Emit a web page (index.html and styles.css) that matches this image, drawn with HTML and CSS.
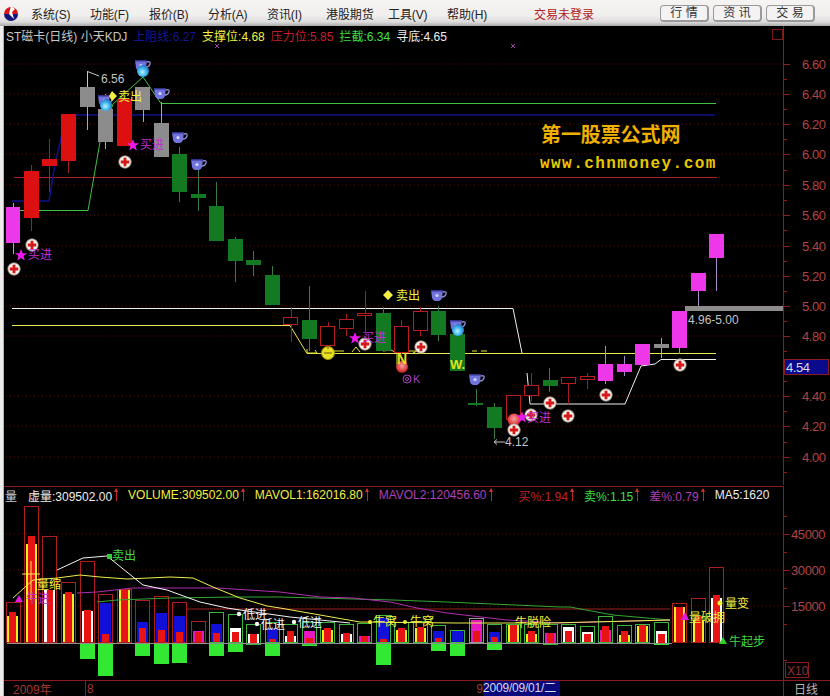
FILE: index.html
```html
<!DOCTYPE html>
<html lang="zh">
<head>
<meta charset="utf-8">
<title>ST磁卡 日线</title>
<link rel="stylesheet" href="styles.css">
</head>
<body>
<div class="app">
  <header class="menubar">
    <svg class="logo" viewBox="0 0 16 17" width="16" height="17"><path d="M1 9a7 7 0 0 1 14 0z" fill="#d81818"/><path d="M1 9a7 7 0 0 0 14 0z" fill="#14147a"/><path d="M8 1l-2 8 5 5-2-7 3-3z" fill="#fff"/></svg>
    <nav class="menu">
      <span class="mi">系统(S)</span><span class="mi">功能(F)</span><span class="mi">报价(B)</span><span class="mi">分析(A)</span><span class="mi">资讯(I)</span><span class="mi mi-hk">港股期货</span><span class="mi">工具(V)</span><span class="mi">帮助(H)</span>
    </nav>
    <span class="status">交易未登录</span>
    <div class="tabs"><span class="tab">行 情</span><span class="tab">资 讯</span><span class="tab">交 易</span></div>
  </header>
  <div class="body">
    <div class="strip"></div>
    <main class="chart">
      <div class="legend">
        <span class="l-title">ST磁卡(日线) 小天KDJ</span>
        <span class="navy">上阻线:6.27</span>
        <span class="yellow">支撑位:4.68</span>
        <span class="red">压力位:5.85</span>
        <span class="green">拦截:6.34</span>
        <span class="white">寻底:4.65</span>
        <span class="winbox"></span>
      </div>
      <svg class="pane pane-top" viewBox="4 45 826 441" width="826" height="441">
        <defs>
          <radialGradient id="ballBlue" cx=".45" cy=".6" r=".6"><stop offset="0" stop-color="#b8f4ff"/><stop offset=".6" stop-color="#38b0e8"/><stop offset="1" stop-color="#2a6cc0"/></radialGradient>
          <radialGradient id="ballRed" cx=".5" cy=".4" r=".6"><stop offset="0" stop-color="#f8a0a0"/><stop offset=".7" stop-color="#e04040"/><stop offset="1" stop-color="#a01818"/></radialGradient>
          <symbol id="cup" viewBox="0 0 16 12" width="16" height="12" overflow="visible">
            <path d="M0 1h12l-1 8q-1 3-3 3H4q-2 0-3-3z" fill="#7373dd"/>
            <path d="M0 1h12v1.5H0z" fill="#33338c"/>
            <path d="M12 3q4-1 3 2t-4 3" fill="none" stroke="#9090d8" stroke-width="1.3"/>
            <circle cx="6" cy="6.5" r="1.6" fill="#d0d8ff"/>
          </symbol>
          <symbol id="plus" viewBox="0 0 14 14" width="14" height="14">
            <circle cx="7" cy="7" r="6.2" fill="#f0f0ea" stroke="#99887a" stroke-width=".8"/>
            <path d="M5.6 2.8h2.8v2.8h2.8v2.8H8.4v2.8H5.6V8.4H2.8V5.6h2.8z" fill="#d81818"/>
          </symbol>
          <symbol id="star" viewBox="0 0 12 12" width="12" height="12"><path d="M6 0l1.6 4.2H12L8.5 7l1.3 4.6L6 9l-3.8 2.6L3.5 7 0 4.2h4.4z" fill="#f018f0"/></symbol>
        </defs>

        <path class="grid" d="M6 65H783M6 95H783M6 125H783M6 155H783M6 186H783M6 216H783M6 247H783M6 277H783M6 307H783M6 337H783M6 397H783M6 427H783M6 458H783"/>

        <path class="axis" d="M783.5 45V486M783 65h7M783 80h4M783 95h7M783 110h4M783 125h7M783 140h4M783 155h7M783 171h4M783 186h7M783 201h4M783 216h7M783 231h4M783 247h7M783 262h4M783 277h7M783 292h4M783 307h7M783 322h4M783 337h7M783 352h4M783 382h4M783 397h7M783 412h4M783 427h7M783 443h4M783 458h7M783 473h4"/>
        <g class="ylabels">
          <text x="802" y="70">6.60</text><text x="802" y="100">6.40</text><text x="802" y="130">6.20</text><text x="802" y="160">6.00</text><text x="802" y="191">5.80</text><text x="802" y="221">5.60</text><text x="802" y="252">5.40</text><text x="802" y="282">5.20</text><text x="802" y="312">5.00</text><text x="802" y="342">4.80</text><text x="802" y="402">4.40</text><text x="802" y="432">4.20</text><text x="802" y="463">4.00</text>
        </g>
        <rect class="pricebox" x="784.5" y="360.5" width="44" height="15"/>
        <text class="pricetext" x="786" y="373">4.54</text>

        <path class="l-red" d="M14 178.5H717"/>
        <path class="l-blue" d="M12 202H49L55 165 62 135 76 116H715"/>
        <path class="l-green" d="M20 211.5H88L100 143 113 105 143 78 161 104.500H716"/>
        <path class="l-white" d="M12 309.500H513L522 354"/>
        <path class="l-yellow" d="M12 326.500H290L307 354.500H716"/>
        <path class="l-white" d="M527 374L530 405H625L641 367 655 365 661 360.500H716"/>
        <path class="l-yfrag" d="M307 350v4h10l-2-3M332 352h12M352 353l4-5 4 5M383 352l8-1 6 3M397 352h20l-4 2M397 352v14h9M472 352h5M481 352h6"/>

        <path class="w-red" d="M31 166V232M49 140V193M68 115V174M124 100V147M291 308V343M328 323V352M346 315V337M365 292V333M401 321V367M420 308V337M513 396V435M531 374V402M568 378V405M587 374V390"/>
        <path class="w-gray" d="M87 72V131M105 95V150M143 88V123M161 103V158M661 339V359M13 204V255"/>
        <path class="w-green" d="M179 148V203M198 160V212M216 183V207M235 238V283M253 252V277M272 267V280M309 287V352M383 308V352M438 307V342M476 390V407M494 404V440M549 369V393"/>
        <path class="w-pink" d="M605 347V385M624 357V377M642 345V366M679 349V355M698 292V308M716 259V292"/>

        <g class="b-pink"><rect x="6" y="208" width="14" height="36"/><rect x="598" y="365" width="15" height="17"/><rect x="617" y="365" width="15" height="8"/><rect x="635" y="345" width="15" height="21"/><rect x="672" y="312" width="15" height="37"/><rect x="691" y="274" width="15" height="18"/><rect x="709" y="235" width="15" height="24"/></g>
        <g class="b-red"><rect x="24" y="172" width="15" height="47"/><rect x="42" y="160" width="15" height="7"/><rect x="61" y="115" width="15" height="47"/><rect x="117" y="100" width="15" height="47"/></g>
        <g class="b-gray"><rect x="80" y="88" width="15" height="20"/><rect x="98" y="110" width="15" height="33"/><rect x="135" y="88" width="15" height="23"/><rect x="154" y="124" width="15" height="34"/><rect x="654" y="345" width="15" height="4"/><rect x="685" y="307" width="98" height="5"/></g>
        <g class="b-green"><rect x="172" y="155" width="15" height="38"/><rect x="191" y="195" width="15" height="4"/><rect x="209" y="207" width="15" height="35"/><rect x="228" y="240" width="15" height="22"/><rect x="246" y="261" width="15" height="5"/><rect x="265" y="276" width="15" height="30"/><rect x="302" y="321" width="15" height="19"/><rect x="376" y="314" width="15" height="38"/><rect x="431" y="312" width="15" height="24"/><rect x="450" y="335" width="15" height="37"/><rect x="468" y="404" width="15" height="2"/><rect x="487" y="408" width="15" height="21"/><rect x="543" y="381" width="15" height="6"/></g>
        <g class="b-hollow"><rect x="283.500" y="318.500" width="14" height="7"/><rect x="320.500" y="327.500" width="14" height="19"/><rect x="339.500" y="320.500" width="14" height="9"/><rect x="357.500" y="314.500" width="14" height="2"/><rect x="394.500" y="327.500" width="14" height="26"/><rect x="413.500" y="312.500" width="14" height="19"/><rect x="506.500" y="396.500" width="14" height="24"/><rect x="524.500" y="386.500" width="14" height="10"/><rect x="561.500" y="378.500" width="14" height="6"/><rect x="580.500" y="377.500" width="14" height="3"/></g>

        <use href="#cup" x="135" y="60"/><use href="#cup" x="98" y="95"/><use href="#cup" x="154" y="88"/><use href="#cup" x="172" y="132"/><use href="#cup" x="191" y="159"/><use href="#cup" x="431" y="290"/><use href="#cup" x="450" y="320"/><use href="#cup" x="469" y="374"/>
        <circle cx="143" cy="72" r="6" fill="url(#ballBlue)"/><circle cx="106" cy="106" r="6" fill="url(#ballBlue)"/><circle cx="458" cy="331" r="6" fill="url(#ballBlue)"/>
        <circle cx="402" cy="368" r="6" fill="url(#ballRed)"/><circle cx="514" cy="421" r="6.500" fill="url(#ballRed)"/>
        <circle cx="328" cy="354" r="6.500" fill="#e8e020" stroke="#a09810"/><path d="M324 354h8M328 350v-3" stroke="#605a10" fill="none"/>

        <use href="#plus" x="118" y="156"/><use href="#plus" x="25" y="239"/><use href="#plus" x="7" y="263"/><use href="#plus" x="358" y="338"/><use href="#plus" x="414" y="341"/><use href="#plus" x="524" y="409"/><use href="#plus" x="543" y="397"/><use href="#plus" x="507" y="424"/><use href="#plus" x="561" y="410"/><use href="#plus" x="599" y="389"/><use href="#plus" x="673" y="359"/>

        <use href="#star" x="127" y="140"/><use href="#star" x="15" y="250"/><use href="#star" x="349" y="333"/><use href="#star" x="516" y="412"/>
        <g class="t-magenta"><text x="140" y="150">买进</text><text x="28" y="260">买进</text><text x="362" y="343">买进</text><text x="527" y="423">买进</text></g>

        <path class="dia" d="M112 92l5 5-5 5-3-5zM388 291l5 5-5 5-5-5z"/>
        <g class="t-yellow"><text x="118" y="102">卖出</text><text x="396" y="301">卖出</text></g>
        <text class="t-wbold" x="450" y="370">W.</text>
        <text class="t-nbold" x="397" y="365">N</text>

        <path class="flag" d="M87.500 88V72.500L99 77"/>
        <text class="t-gray" x="101" y="84">6.56</text>
        <path class="flag" d="M505 443H494l3-2.500M494 443l3 2.500"/>
        <text class="t-gray" x="505" y="447">4.12</text>
        <text class="t-gray" x="688" y="325">4.96-5.00</text>
        <circle class="ok" cx="407" cy="380" r="4"/><circle class="ok" cx="407" cy="380" r="1.500"/>
        <text class="t-ok" x="413" y="384">K</text>

        <path class="xm" d="M215 45l4 4M219 45l-4 4M511 45l4 4M515 45l-4 4"/>

        <text class="wm1" x="541" y="143">第一股票公式网</text>
        <text class="wm2" x="540" y="169">www.chnmoney.com</text>
      </svg>
      <div class="vlegend">
        <span class="v-name">量</span>
        <span class="vi v-a white">虚量:309502.00</span><i class="arr"></i>
        <span class="vi yellow">VOLUME:309502.00</span><i class="arr"></i>
        <span class="vi yellow">MAVOL1:162016.80</span><i class="arr"></i>
        <span class="vi purple">MAVOL2:120456.60</span><i class="arr"></i>
        <span class="vi v-b red">买%:1.94</span><i class="arr"></i>
        <span class="vi green">卖%:1.15</span><i class="arr"></i>
        <span class="vi purple">差%:0.79</span><i class="arr"></i>
        <span class="vi white">MA5:1620</span>
      </div>
      <svg class="pane pane-vol" viewBox="4 503 826 177" width="826" height="177">
        <path class="grid" d="M6 534H783M6 570H783M6 606H783"/>
        <path class="axis" d="M783.500 503V680M783 516h4M783 534h7M783 552h4M783 570h7M783 588h4M783 606h7M783 624h4M783 660h4"/>
        <g class="ylabels"><text x="791" y="539">45000</text><text x="791" y="575">30000</text><text x="791" y="611">15000</text></g>
        <rect class="x10" x="785.500" y="662.500" width="23" height="15"/><text class="x10t" x="787" y="675">X10</text>

        <g class="neg"><rect x="80" y="643" width="15" height="16"/><rect x="98" y="643" width="15" height="33"/><rect x="135" y="643" width="15" height="13"/><rect x="154" y="643" width="15" height="21"/><rect x="172" y="643" width="15" height="20"/><rect x="209" y="643" width="15" height="13"/><rect x="228" y="643" width="15" height="9"/><rect x="246" y="643" width="15" height="2"/><rect x="265" y="643" width="15" height="13"/><rect x="302" y="643" width="15" height="3"/><rect x="376" y="643" width="15" height="22"/><rect x="431" y="643" width="15" height="8"/><rect x="450" y="643" width="15" height="13"/><rect x="487" y="643" width="15" height="7"/><rect x="543" y="643" width="15" height="2"/><rect x="654" y="643" width="15" height="2"/></g>

        <g class="f-white"><rect x="44" y="590" width="11" height="53"/><rect x="82" y="611" width="11" height="32"/><rect x="230" y="628" width="11" height="15"/><rect x="248" y="634" width="11" height="9"/><rect x="285" y="636" width="11" height="7"/><rect x="341" y="634" width="11" height="9"/><rect x="563" y="627" width="11" height="16"/><rect x="582" y="632" width="11" height="11"/><rect x="656" y="631" width="11" height="12"/><rect x="711" y="598" width="11" height="45"/></g>
        <g class="f-yellow"><rect x="7" y="616" width="11" height="27"/><rect x="26" y="544" width="11" height="99"/><rect x="63" y="594" width="11" height="49"/><rect x="119" y="589" width="11" height="54"/><rect x="322" y="630" width="11" height="13"/><rect x="396" y="630" width="11" height="13"/><rect x="415" y="628" width="11" height="15"/><rect x="508" y="625" width="11" height="18"/><rect x="526" y="634" width="11" height="9"/><rect x="619" y="635" width="11" height="8"/><rect x="637" y="626" width="11" height="17"/><rect x="674" y="607" width="11" height="36"/><rect x="693" y="620" width="11" height="23"/></g>
        <g class="f-blue"><rect x="100" y="603" width="11" height="40"/><rect x="137" y="622" width="11" height="21"/><rect x="156" y="613" width="11" height="30"/><rect x="174" y="616" width="11" height="27"/><rect x="211" y="624" width="11" height="19"/><rect x="267" y="628" width="11" height="15"/><rect x="378" y="618" width="11" height="25"/><rect x="433" y="631" width="11" height="12"/><rect x="452" y="630" width="11" height="13"/><rect x="489" y="632" width="11" height="11"/></g>
        <g class="f-pink"><rect x="193" y="631" width="11" height="12"/><rect x="304" y="631" width="11" height="12"/><rect x="359" y="636" width="11" height="7"/><rect x="471" y="620" width="11" height="23"/><rect x="545" y="633" width="11" height="10"/><rect x="600" y="630" width="11" height="13"/></g>
        <g class="f-red"><rect x="9" y="612" width="7" height="31"/><rect x="28" y="536" width="7" height="107"/><rect x="47" y="590" width="6" height="53"/><rect x="65" y="592" width="7" height="51"/><rect x="84" y="610" width="7" height="33"/><rect x="102" y="634" width="7" height="9"/><rect x="121" y="589" width="7" height="54"/><rect x="139" y="628" width="7" height="15"/><rect x="158" y="630" width="7" height="13"/><rect x="176" y="632" width="7" height="11"/><rect x="195" y="632" width="7" height="11"/><rect x="213" y="633" width="7" height="10"/><rect x="232" y="632" width="7" height="11"/><rect x="250" y="634" width="7" height="9"/><rect x="269" y="639" width="7" height="4"/><rect x="287" y="631" width="7" height="12"/><rect x="306" y="638" width="7" height="5"/><rect x="324" y="628" width="7" height="15"/><rect x="343" y="633" width="7" height="10"/><rect x="361" y="636" width="7" height="7"/><rect x="380" y="639" width="7" height="4"/><rect x="398" y="628" width="7" height="15"/><rect x="417" y="627" width="7" height="16"/><rect x="435" y="638" width="7" height="5"/><rect x="473" y="631" width="7" height="12"/><rect x="491" y="637" width="7" height="6"/><rect x="510" y="625" width="7" height="18"/><rect x="528" y="631" width="7" height="12"/><rect x="547" y="633" width="7" height="10"/><rect x="565" y="631" width="7" height="12"/><rect x="584" y="634" width="7" height="9"/><rect x="602" y="626" width="7" height="17"/><rect x="621" y="631" width="7" height="12"/><rect x="639" y="625" width="7" height="18"/><rect x="658" y="634" width="7" height="9"/><rect x="676" y="607" width="7" height="36"/><rect x="695" y="616" width="7" height="27"/><rect x="713" y="595" width="7" height="48"/></g>

        <g class="o-red"><rect x="6.500" y="602.500" width="14" height="40"/><rect x="24.500" y="506.500" width="14" height="136"/><rect x="42.500" y="536.500" width="14" height="106"/><rect x="61.500" y="582.500" width="14" height="60"/><rect x="80.500" y="561.500" width="14" height="81"/><rect x="98.500" y="594.500" width="14" height="48"/><rect x="117.500" y="589.500" width="14" height="53"/><rect x="135.500" y="600.500" width="14" height="42"/><rect x="154.500" y="596.500" width="14" height="46"/><rect x="172.500" y="602.500" width="14" height="40"/><rect x="191.500" y="621.500" width="14" height="21"/><rect x="672.500" y="603.500" width="14" height="39"/><rect x="691.500" y="598.500" width="14" height="44"/><rect x="709.500" y="567.500" width="14" height="75"/></g>
        <g class="o-green"><rect x="209.500" y="612.500" width="14" height="30"/><rect x="228.500" y="614.500" width="14" height="28"/><rect x="246.500" y="624.500" width="14" height="20"/><rect x="265.500" y="622.500" width="14" height="20"/><rect x="283.500" y="624.500" width="14" height="18"/><rect x="302.500" y="622.500" width="14" height="22"/><rect x="320.500" y="622.500" width="14" height="20"/><rect x="339.500" y="624.500" width="14" height="18"/><rect x="357.500" y="623.500" width="14" height="19"/><rect x="376.500" y="615.500" width="14" height="27"/><rect x="394.500" y="622.500" width="14" height="20"/><rect x="413.500" y="621.500" width="14" height="21"/><rect x="431.500" y="625.500" width="14" height="17"/><rect x="450.500" y="630.500" width="14" height="12"/><rect x="487.500" y="624.500" width="14" height="18"/><rect x="506.500" y="624.500" width="14" height="18"/><rect x="524.500" y="624.500" width="14" height="18"/><rect x="543.500" y="624.500" width="14" height="20"/><rect x="561.500" y="624.500" width="14" height="18"/><rect x="580.500" y="626.500" width="14" height="16"/><rect x="598.500" y="616.500" width="14" height="26"/><rect x="617.500" y="625.500" width="14" height="17"/><rect x="635.500" y="624.500" width="14" height="18"/><rect x="654.500" y="622.500" width="14" height="21"/></g>
        <rect class="o-gray" x="469.500" y="618.500" width="14" height="24"/>
        <path class="base" d="M7 643H672"/>

        <path class="c-darkred" d="M187 609H670"/>
        <path class="c-green" d="M97 602L117 600 170 598 233 597 280 597 393 600 447 602 560 607 570 607 613 615 670 620"/>
        <path class="c-purple" d="M77 593L97 592 133 588 170 588 217 588 280 592 320 597 353 598 390 602 417 608 447 613 507 620 560 623 670 620"/>
        <path class="c-yellow" d="M13 598L33 580 57 578 80 575 100 577 127 579 170 577 193 578 213 587 240 598 267 606 280 608 360 622 457 623 513 623 550 623 670 620"/>
        <path class="c-white" d="M57 570L83 558 107 556 143 585 167 590 200 602 227 608 240 610 290 617 350 623"/>
        <path class="c-yellow" d="M22 574h18M31 561V600"/>

        <rect x="107" y="554" width="5" height="5" class="m-green"/>
        <text class="t-green" x="112" y="560">卖出</text>
        <g class="t-white"><text x="243" y="619">低进</text><text x="261" y="629">低进</text><text x="298" y="627">低进</text></g>
        <circle cx="239" cy="614" r="2.200" class="m-white"/><circle cx="257" cy="624" r="2.200" class="m-white"/><circle cx="294" cy="622" r="2.200" class="m-white"/>
        <g class="t-yellow"><text x="373" y="626">牛窝</text><text x="410" y="626">牛窝</text><text x="515" y="627">牛脱险</text><text x="725" y="608">量变</text><text x="37" y="589">量缩</text><text x="689" y="622">量破拥</text></g>
        <circle cx="370" cy="622" r="2" class="m-yellow"/><circle cx="405" cy="622" r="2" class="m-yellow"/><circle cx="720" cy="603" r="2.500" class="m-yellow"/>
        <path d="M19 595l4 7h-8z M685 612l4 8h-8z" class="m-magenta"/>
        <g class="t-magenta"><text x="26" y="603">牛进</text></g>
        <path d="M723 637l4 7h-8z" class="m-green"/>
        <text class="t-green" x="729" y="646">牛起步</text>
      </svg>
      <footer class="foot">
        <span class="f-year">2009年</span>
        <div class="f-months"><span>8</span><span>9</span></div>
        <span class="f-date">2009/09/01/二</span>
        <span class="f-fill"></span>
        <span class="f-period">日线</span>
      </footer>
    </main>
  </div>
</div>
</body>
</html>
```

FILE: styles.css
```css
html, body { margin: 0; padding: 0; background: #000; }
body { width: 830px; height: 696px; overflow: hidden; font-family: "Liberation Sans", "Noto Sans CJK SC", sans-serif; }
.app { display: flex; flex-direction: column; width: 830px; height: 696px; }

.menubar { display: flex; align-items: center; height: 26px; box-sizing: border-box; padding-left: 3px; background: linear-gradient(#f6f3f3 0, #f1eeee 60%, #dcdada 85%, #a9a9a9 100%); font-size: 12px; color: #222; white-space: nowrap; }
.logo { flex: none; }
.menu { display: flex; margin-left: 12px; }
.mi { width: 59px; letter-spacing: -.1px; }
.mi-hk { width: 62px; }
.status { margin-left: 28px; color: #b02020; }
.tabs { display: flex; gap: 4px; margin-left: 66px; }
.tab { width: 49px; height: 17px; box-sizing: border-box; border: 1px solid #9a9a9a; border-right-width: 2px; border-bottom-width: 2px; border-radius: 4px; background: #f4f2f2; text-align: center; line-height: 14px; color: #333; flex: none; }

.body { display: flex; flex: 1; min-height: 0; }
.strip { width: 4px; flex: none; background: linear-gradient(90deg, #efecec 0, #efecec 75%, #777 100%); }
.chart { display: flex; flex-direction: column; width: 826px; background: #000; }

.legend { display: flex; align-items: center; gap: 6px; height: 19px; box-sizing: border-box; width: 780px; padding: 1px 0 0 2px; border-right: 1px solid #8c1c1c; font-size: 12px; white-space: nowrap; position: relative; }
.l-title { color: #c8c8c8; }
.winbox { position: absolute; left: 768px; top: 3px; width: 9px; height: 9px; border: 1px solid #7a1a1a; }
.navy { color: #161690; }
.yellow { color: #f4f040; }
.red { color: #c02028; }
.green { color: #3ce040; }
.white { color: #eee; }
.purple { color: #b040b8; }

.pane { display: block; flex: none; }
.grid { stroke: #4e1212; stroke-dasharray: 1 3; fill: none; }
.axis { stroke: #8c1c1c; fill: none; shape-rendering: crispEdges; }
.ylabels text { fill: #b04444; font-size: 13px; letter-spacing: -.4px; }
.pricebox { fill: #0a0a8c; stroke: #8c1c1c; }
.pricetext { fill: #d8d8e8; font-size: 13px; letter-spacing: -.4px; }

.l-red, .l-blue, .l-green, .l-white, .l-yellow, .l-yfrag { fill: none; }
.l-red { stroke: #b02020; }
.l-blue { stroke: #10108c; stroke-width: 1.500; }
.l-green { stroke: #40c040; }
.l-white { stroke: #f0f0f0; }
.l-yellow { stroke: #e8e850; }
.l-yfrag { stroke: #e8e830; }

.w-red, .w-gray, .w-green, .w-pink { fill: none; shape-rendering: crispEdges; }
.w-red { stroke: #a02020; }
.w-gray { stroke: #aaa; }
.w-green { stroke: #3a7a48; }
.w-pink { stroke: #a88cc8; }
.b-pink rect { fill: #ec38e8; shape-rendering: crispEdges; }
.b-red rect { fill: #dc1010; shape-rendering: crispEdges; }
.b-gray rect { fill: #8c8c8c; shape-rendering: crispEdges; }
.b-green rect { fill: #137a22; shape-rendering: crispEdges; }
.b-hollow rect { fill: #000; stroke: #b81c1c; shape-rendering: crispEdges; }

.pane text { font-family: "Liberation Sans", "Noto Sans CJK SC", sans-serif; }
.t-magenta text { fill: #c030d0; font-size: 12px; }
.t-yellow text { fill: #f0f040; font-size: 12px; }
.t-white text { fill: #f2f2f2; font-size: 12px; }
.t-green { fill: #40d840; font-size: 12px; }
.t-gray { fill: #c4c4c4; font-size: 12px; }
.t-wbold { fill: #e0e020; font-size: 13px; font-weight: bold; }
.t-nbold { fill: #e8e020; font-size: 14px; font-weight: bold; }
.t-ok { fill: #a040c0; font-size: 11px; }
.ok { fill: none; stroke: #b040c8; }
.dia { fill: #f0f040; }
.flag { fill: none; stroke: #c8c8c8; }
.xm { stroke: #a040a8; fill: none; }
.wm1 { fill: #f0b000; font-size: 20px; font-weight: bold; letter-spacing: -.1px; }
.wm2 { fill: #e8c800; font-family: "Liberation Mono", monospace; font-size: 16px; font-weight: bold; letter-spacing: 1.45px; }
.pane text.wm2 { font-family: "Liberation Mono", monospace; }

.vlegend { display: flex; align-items: center; height: 17px; box-sizing: border-box; width: 780px; margin-top: 1px; border-top: 1px solid #8c1c1c; border-right: 1px solid #8c1c1c; font-size: 12px; white-space: nowrap; overflow: hidden; }
.v-name { width: 23px; padding-left: 1px; color: #ccc; flex: none; }
.vi { flex: none; }
.arr { flex: none; width: 1px; height: 12px; margin: 0 11px 0 4px; background: #c02828; position: relative; }
.arr::before { content: ""; position: absolute; left: -2px; top: -1px; border-left: 2.500px solid transparent; border-right: 2.500px solid transparent; border-bottom: 4px solid #d03030; }
.v-b { margin-left: 16px; }

.neg rect { fill: #33e833; shape-rendering: crispEdges; }
.f-white rect { fill: #fff; shape-rendering: crispEdges; }
.f-yellow rect { fill: #f4f020; shape-rendering: crispEdges; }
.f-blue rect { fill: #1010d8; shape-rendering: crispEdges; }
.f-pink rect { fill: #e818c0; shape-rendering: crispEdges; }
.f-red rect { fill: #e81414; shape-rendering: crispEdges; }
.o-red rect { fill: none; stroke: #b01c1c; shape-rendering: crispEdges; }
.o-green rect { fill: none; stroke: #38b838; shape-rendering: crispEdges; }
.o-gray { fill: none; stroke: #999; shape-rendering: crispEdges; }
.base { stroke: #909090; fill: none; shape-rendering: crispEdges; }
.c-darkred, .c-green, .c-purple, .c-yellow, .c-white { fill: none; }
.c-darkred { stroke: #a02020; }
.c-green { stroke: #34a834; }
.c-purple { stroke: #b030b0; }
.c-yellow { stroke: #eeee50; }
.c-white { stroke: #f4f4f4; }
.m-green { fill: #30d030; }
.m-white { fill: #f4f4f4; }
.m-yellow { fill: #f0f030; }
.m-magenta { fill: #e018e0; }
.x10 { fill: none; stroke: #8c1c1c; }
.x10t { fill: #903030; font-size: 12px; }

.foot { display: flex; align-items: center; height: 16px; box-sizing: border-box; border-top: 1px solid #8c1c1c; font-size: 12px; color: #a03838; white-space: nowrap; }
.f-year { width: 82px; box-sizing: border-box; padding-left: 9px; border-right: 1px solid #8c1c1c; flex: none; }
.f-months { display: flex; justify-content: space-between; width: 397px; box-sizing: border-box; padding: 0 0 0 1px; flex: none; }
.f-date { width: 77px; height: 15px; line-height: 15px; background: #0a0a7c; color: #d8d8e8; box-sizing: border-box; flex: none; overflow: hidden; letter-spacing: -.2px; }
.f-fill { flex: 1; }
.f-period { width: 47px; box-sizing: border-box; padding-left: 10px; border-left: 1px solid #8c1c1c; color: #b8b8b8; flex: none; }
```
